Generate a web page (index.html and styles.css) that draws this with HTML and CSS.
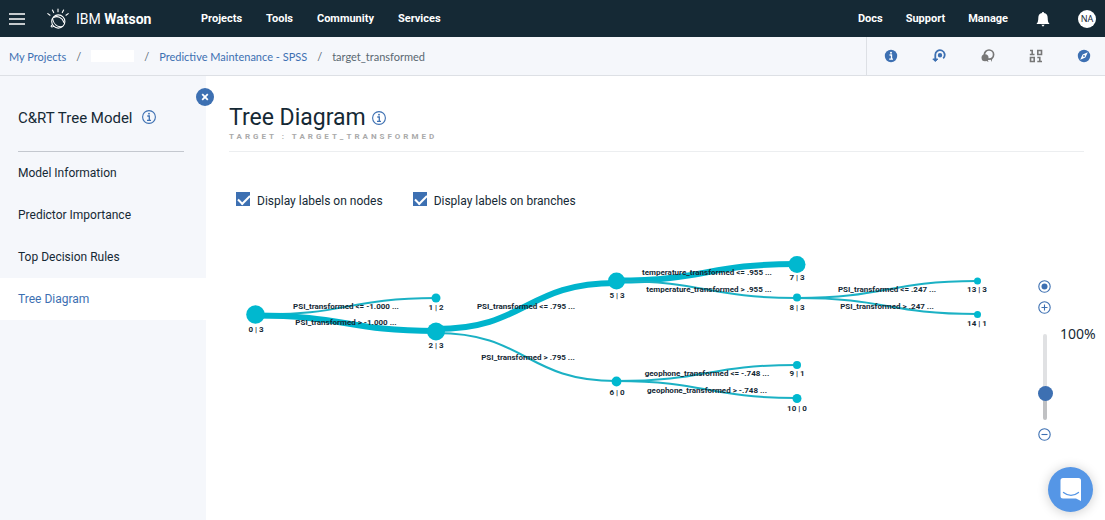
FILE: index.html
```html
<!DOCTYPE html>
<html lang="en">
<head>
<meta charset="utf-8">
<title>Tree Diagram - IBM Watson</title>
<link rel="stylesheet" href="styles.css">
</head>
<body>
<header class="topbar">
  <button class="icon-button menu" aria-label="Menu">
    <svg width="16" height="12" viewBox="0 0 16 12" stroke="#fff" stroke-width="1.3"><path d="M0 1h16M0 6h16M0 11h16"/></svg>
  </button>
  <a class="brand" href="#">
    <svg width="22" height="22" viewBox="0 0 22 22" fill="none" stroke="#fff" stroke-width="1.1" stroke-linecap="round">
      <circle cx="11.300" cy="13.500" r="6.600"/>
      <path d="M11 1v2.800M5.400 2l1.300 2.600M16.600 2l-1.300 2.600M.8 5.600l2.200 1.600M21.200 5.600L19 7.200"/>
      <path d="M5.500 10.500C6.500 16 10 19.500 15.500 18.500M5.200 16.800c-2 1.700-.8 3 1.300 1.600M6.500 9.500c4-2 8.500-.5 10.500 5"/>
    </svg>
    <span>IBM <b>Watson</b></span>
  </a>
  <nav class="nav nav-main"><a href="#">Projects</a><a href="#">Tools</a><a href="#">Community</a><a href="#">Services</a></nav>
  <nav class="nav nav-side"><a href="#">Docs</a><a href="#">Support</a><a href="#">Manage</a></nav>
  <button class="icon-button bell" aria-label="Notifications">
    <svg width="14" height="16" viewBox="0 0 14 16" fill="#fff"><path d="M7 1c.7 0 1 .4 1 1 2.400.4 3.700 2.200 3.700 5 0 2.700.5 4.500 1.600 5.600V13H.7v-.4C1.800 11.500 2.300 9.700 2.300 7 2.300 4.200 3.600 2.400 6 2c0-.6.3-1 1-1zM5.300 13.700h3.400L7 15.700z"/></svg>
  </button>
  <button class="avatar">NA</button>
</header>

<div class="subbar">
  <nav class="crumbs" aria-label="Breadcrumb">
    <a href="#">My Projects</a><span class="slash">/</span><span class="blank"></span><span class="slash">/</span><a href="#">Predictive Maintenance - SPSS</a><span class="slash">/</span><span class="current">target_transformed</span>
  </nav>
  <div class="tools">
    <button class="icon-button" aria-label="Information">
      <svg width="14" height="14" viewBox="0 0 14 14"><circle cx="7" cy="7" r="6.200" fill="#3d70b2"/><path d="M5.500 6h2v4M5.200 10.200h3.800" fill="none" stroke="#fff" stroke-width="1.300"/><circle cx="7" cy="3.800" r="1" fill="#fff"/></svg>
    </button>
    <button class="icon-button" aria-label="Replay">
      <svg width="14" height="14" viewBox="0 0 14 14" fill="none" stroke="#3d70b2" stroke-width="1.800"><path d="M3.300 12V6a4.700 4.700 0 1 1 7.900 3.300"/><path d="M.8 10l2.500 2.500L5.800 10z" fill="#3d70b2" stroke-width="1"/><circle cx="8" cy="6.300" r="1.300" fill="#3d70b2"/></svg>
    </button>
    <button class="icon-button" aria-label="Comments">
      <svg width="14" height="14" viewBox="0 0 14 14"><circle cx="8" cy="5.600" r="4.600" fill="none" stroke="#777" stroke-width="1.700"/><circle cx="4" cy="8.800" r="3.500" fill="#777"/><path d="M4.500 11.500l3 1.500-1-3zM9.500 9.500l1 3.500 1-4z" fill="#777"/></svg>
    </button>
    <button class="icon-button" aria-label="Data">
      <svg width="14" height="14" viewBox="0 0 14 14" fill="none" stroke="#777" stroke-width="1.600"><path d="M1 1.500h2.200v3.700M.8 5.500h4.700M8.800 1.500h3.700v4H8.800zM1.500 8.500h3.700v4H1.500zM8.300 8.500h2.500v4M8.300 12.500H13"/></svg>
    </button>
    <button class="icon-button" aria-label="Explore">
      <svg width="14" height="14" viewBox="0 0 14 14"><circle cx="7" cy="7" r="6.200" fill="#3d70b2"/><path d="M10.800 3.200L8.400 8.400 3.200 10.800 5.600 5.600z" fill="#fff"/><circle cx="7" cy="7" r=".9" fill="#3d70b2"/></svg>
    </button>
  </div>
</div>

<div class="page">
  <aside class="sidebar">
    <button class="close" aria-label="Close panel"><svg width="8" height="8" viewBox="0 0 8 8" stroke="#fff" stroke-width="1.800"><path d="M1.200 1.200l5.600 5.600M6.800 1.200L1.200 6.800"/></svg></button>
    <h2 class="model">C&amp;RT Tree Model
      <svg class="info" width="14" height="14" viewBox="0 0 14 14" fill="none" stroke="#3d70b2"><circle cx="7" cy="7" r="6.400" stroke-width="1.100"/><path d="M5.300 6h2v4.300M5 10.300h4" stroke-width="1.300"/><circle cx="7" cy="3.700" r=".9" fill="#3d70b2" stroke="none"/></svg>
    </h2>
    <nav class="views"><a href="#">Model Information</a><a href="#">Predictor Importance</a><a href="#">Top Decision Rules</a><a class="active" href="#" aria-current="page">Tree Diagram</a></nav>
  </aside>

  <main class="content">
    <div class="heading">
      <h1>Tree Diagram
        <svg class="info" width="14" height="14" viewBox="0 0 14 14" fill="none" stroke="#3d70b2"><circle cx="7" cy="7" r="6.400" stroke-width="1.100"/><path d="M5.300 6h2v4.300M5 10.300h4" stroke-width="1.300"/><circle cx="7" cy="3.700" r=".9" fill="#3d70b2" stroke="none"/></svg>
      </h1>
      <p class="target">TARGET : TARGET_TRANSFORMED</p>
    </div>
    <div class="options">
      <label><input type="checkbox" checked><span>Display labels on nodes</span></label>
      <label><input type="checkbox" checked><span>Display labels on branches</span></label>
    </div>
    <div class="stage">
      <svg class="tree" width="780" height="200" viewBox="0 0 780 200" role="img" aria-label="Decision tree">
        <g class="links">
          <path d="M26 84C117 86 117 68 207 68"/>
          <path class="heavy" d="M26 85.500C117 85.500 117 101 207 101"/>
          <path class="heavy" d="M207 99C297 99 297 53 387 53"/>
          <path d="M207 103C297 103 297 151 387 151"/>
          <path class="heavy" d="M387 50.500C478 50.500 478 34 568 34"/>
          <path d="M387 51C478 51 478 68 568 68"/>
          <path d="M387 151C478 151 478 135 568 135"/>
          <path d="M387 151C478 151 478 168 568 168"/>
          <path d="M568 68C658 68 658 51 748 51"/>
          <path d="M568 68C658 68 658 84 748 84"/>
        </g>
        <g class="nodes">
          <circle cx="26.500" cy="84.500" r="9.300"/><circle cx="207" cy="68" r="4.500"/><circle cx="207" cy="101.500" r="9"/>
          <circle cx="387.500" cy="51" r="8.500"/><circle cx="387.500" cy="151.500" r="4.900"/><circle cx="568" cy="34.500" r="8.500"/>
          <circle cx="568" cy="67.500" r="4"/><circle cx="568" cy="135" r="4"/><circle cx="568" cy="168.500" r="4.500"/>
          <circle cx="748.500" cy="51" r="3.500"/><circle cx="748.500" cy="84.500" r="3.500"/>
        </g>
        <g class="labels">
          <text x="27" y="102">0 | 3</text><text x="207" y="80">1 | 2</text><text x="207" y="118">2 | 3</text>
          <text x="388" y="68">5 | 3</text><text x="388" y="165">6 | 0</text><text x="568" y="50">7 | 3</text>
          <text x="568" y="80">8 | 3</text><text x="568" y="146">9 | 1</text><text x="568" y="181">10 | 0</text>
          <text x="748" y="62">13 | 3</text><text x="748" y="96">14 | 1</text>
          <text x="117" y="79">PSI_transformed &lt;= -1.000 ...</text>
          <text x="117" y="95">PSI_transformed &gt; -1.000 ...</text>
          <text x="297" y="79">PSI_transformed &lt;= .795 ...</text>
          <text x="299" y="130">PSI_transformed &gt; .795 ...</text>
          <text x="478" y="45">temperature_transformed &lt;= .955 ...</text>
          <text x="480" y="62">temperature_transformed &gt; .955 ...</text>
          <text x="478" y="146">geophone_transformed &lt;= -.748 ...</text>
          <text x="478" y="163">geophone_transformed &gt; -.748 ...</text>
          <text x="658" y="62">PSI_transformed &lt;= .247 ...</text>
          <text x="658" y="79">PSI_transformed &gt; .247 ...</text>
        </g>
      </svg>
      <div class="zoom">
        <button class="icon-button" aria-label="Reset zoom"><svg width="13" height="13" viewBox="0 0 13 13"><circle cx="6.500" cy="6.500" r="5.700" fill="none" stroke="#3d70b2" stroke-width="1.100"/><circle cx="6.500" cy="6.500" r="3" fill="#3d70b2"/></svg></button>
        <button class="icon-button" aria-label="Zoom in"><svg width="13" height="13" viewBox="0 0 13 13" fill="none" stroke="#3d70b2" stroke-width="1.100"><circle cx="6.500" cy="6.500" r="5.700"/><path d="M3.500 6.500h6M6.500 3.500v6"/></svg></button>
        <div class="slider">
          <input id="zoom-level" type="range" min="0" max="100" value="27" aria-label="Zoom level">
          <label for="zoom-level">100%</label>
        </div>
        <button class="icon-button" aria-label="Zoom out"><svg width="13" height="13" viewBox="0 0 13 13" fill="none" stroke="#3d70b2" stroke-width="1.100"><circle cx="6.500" cy="6.500" r="5.700"/><path d="M3.500 6.500h6"/></svg></button>
      </div>
    </div>
  </main>
</div>
<button class="chat" aria-label="Open chat">
  <svg width="22" height="25" viewBox="0 0 22 25"><path d="M3 1h15.500a2.500 2.500 0 0 1 2.500 2.500V24l-5-2.500H3A2.500 2.500 0 0 1 .5 19V3.500A2.500 2.500 0 0 1 3 1z" fill="#fff"/><path d="M3.500 15.500c4.500 3.700 10.500 3.700 15 0" fill="none" stroke="#5596e6" stroke-width="1.300" stroke-linecap="round"/></svg>
</button>
</body>
</html>
```
FILE: styles.css
```css
* { box-sizing: border-box; }
body {
  margin: 0;
  min-height: 100vh;
  display: flex;
  flex-direction: column;
  overflow: hidden;
  font-family: Roboto, sans-serif;
  font-size: 12px;
  color: #152935;
  background: #fff;
}
a { color: inherit; text-decoration: none; }
h1, h2, p { margin: 0; font-weight: 400; }
button { border: 0; padding: 0; font: inherit; color: inherit; cursor: pointer; }
svg { display: block; flex: none; }
.icon-button { background: none; display: flex; }

.topbar { height: 37px; padding: 0 9px; display: flex; align-items: center; color: #fff; background: #152935; }
.brand { display: flex; align-items: center; gap: 7px; margin-left: 22px; width: 154px; font-size: 14px; }
.brand b { font-weight: 700; }
.nav { display: flex; gap: 24px; font-size: 11px; font-weight: 700; }
.nav-side { gap: 23px; margin-left: auto; }
.bell { margin-left: 28px; }
.avatar { width: 18px; height: 18px; margin-left: 28px; border-radius: 50%; background: #fff; color: #152935; font-family: "Noto Sans", sans-serif; font-size: 9px; }

.subbar { height: 39px; display: flex; background: #f5f7fb; border-bottom: 1px solid #dde0e5; }
.crumbs { flex: 1; display: flex; align-items: center; padding-left: 9px; color: #3d70b2; font-family: Lato, sans-serif; font-size: 11px; }
.slash { width: 25px; text-align: center; color: #5a6872; }
.blank { width: 43px; height: 12px; background: #fff; }
.current { color: #5a6872; }
.tools { display: flex; align-items: center; justify-content: space-between; width: 239px; padding: 0 14px 0 17px; border-left: 1px solid #dde0e5; }

.page { flex: 1; display: flex; }
.sidebar { position: relative; width: 206px; background: #f5f7fb; }
.close { position: absolute; top: 12px; right: -8px; width: 18px; height: 18px; border-radius: 50%; display: grid; place-items: center; background: #3d70b2; }
.model { display: flex; gap: 9px; margin: 0 22px 0 18px; padding: 32px 0 22px; border-bottom: 1px solid #c4c8cf; font-size: 15px; line-height: 21px; white-space: nowrap; }
.model .info { margin-top: 2px; }
.views { display: flex; flex-direction: column; }
.views a { height: 42px; padding-left: 18px; line-height: 42px; }
.views .active { color: #3d70b2; background: #fff; }

.content { flex: 1; min-width: 0; padding: 28px 0 0 23px; }
.heading { margin-right: 21px; padding-bottom: 9px; border-bottom: 1px solid #eceef0; }
h1 { display: flex; align-items: center; gap: 6px; font-size: 23px; line-height: 28px; }
.target { font-size: 8px; line-height: 10px; font-weight: 700; letter-spacing: 3px; color: #aaa; }
.options { display: flex; gap: 30px; padding: 40px 0 0 7px; line-height: 18px; }
.options label { display: flex; gap: 7px; }
.options input {
  appearance: none;
  width: 14px;
  height: 14px;
  margin: 0;
  background: #3d70b2;
}
.options input::after { content: ""; display: block; width: 10px; height: 5px; margin: 3px 0 0 2px; border: solid #fff; border-width: 0 0 2px 2px; transform: rotate(-45deg); }
.stage { display: flex; justify-content: space-between; margin-top: 20px; }
.links { fill: none; stroke: #1bb1c4; stroke-width: 2; }
.links .heavy { stroke: #00b4cc; stroke-width: 6; }
.nodes { fill: #00b8cf; }
.labels { fill: #152935; font-size: 8px; font-weight: 700; text-anchor: middle; }
.zoom { display: flex; flex-direction: column; gap: 8px; width: 67px; padding-top: 50px; }
.slider { display: flex; gap: 8px; margin-top: 12px; }
.slider label { margin-top: -9px; font-family: "Noto Sans", sans-serif; font-size: 14px; line-height: 18px; }
.slider input { appearance: none; writing-mode: vertical-lr; direction: rtl; width: 14px; height: 86px; margin: 0; background: none; }
.slider input::-webkit-slider-runnable-track { width: 4px; border-radius: 2px; background: linear-gradient(#e0e1e3 70%, #c0c1c3 70%); }
.slider input::-webkit-slider-thumb { appearance: none; width: 15px; height: 15px; margin-left: -5px; border-radius: 50%; background: #3d70b2; }
.chat { position: fixed; right: 12px; bottom: 8px; width: 45px; height: 45px; border-radius: 50%; display: grid; place-items: center; background: #5596e6; box-shadow: 0 1px 12px rgba(0, 0, 0, .2); }
```
